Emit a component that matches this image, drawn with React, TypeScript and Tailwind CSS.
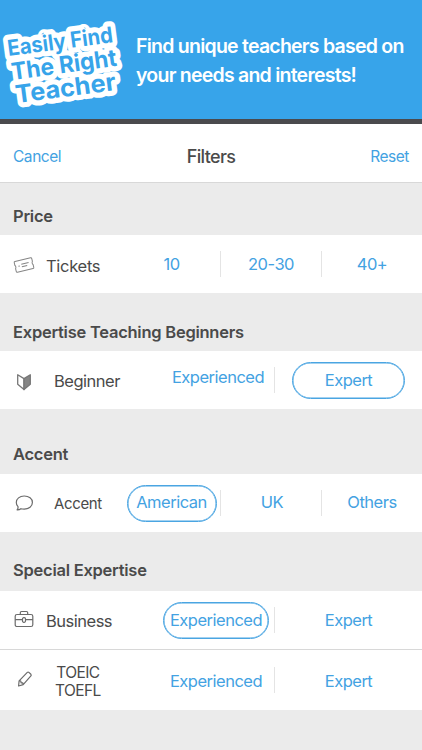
import React from 'react';

interface Option {
  label: string;
  selected?: boolean;
  className?: string;
}

interface FilterRowProps {
  icon: React.ReactNode;
  label: React.ReactNode;
  labelClass: string;
  options: Option[];
  className?: string;
}

const TicketIcon = () => (
  <svg width="22" height="20" viewBox="0 0 22 20" fill="none" stroke="#858585" strokeWidth="1" strokeLinejoin="round">
    <g transform="rotate(-13 11 10)">
      <path d="M3 4.500h16q1 0 1 1v2.900q-.6.400-.6 1.600t.6 1.600v2.900q0 1-1 1H3q-1 0-1-1v-2.900q.6-.4.6-1.600T2 8.400V5.500q0-1 1-1z" />
      <path d="M8.500 8.700h7.500M8.500 11.300h5.500M5.300 10h1.400" />
    </g>
  </svg>
);

const BeginnerIcon = () => (
  <svg className="mt-[2px]" width="16" height="18" viewBox="0 0 16 18" stroke="#777" strokeWidth="1.3" strokeLinejoin="round">
    <path d="M8 5.600 1.700 1.800v9.400L8 16.600z" fill="#fff" />
    <path d="M8 5.600l6.300-3.800v9.400L8 16.600z" fill="#858585" />
  </svg>
);

const BubbleIcon = () => (
  <svg className="-mt-[2px]" width="20" height="18" viewBox="0 0 20 18" fill="none" stroke="#6b6b6b" strokeWidth="1.2" strokeLinejoin="round">
    <path d="M10.200 2C5.600 2 2.300 4.800 2.300 8.400c0 1.800.7 3.100 1.700 4.200q.3 1.900-.9 3.300 2.300.1 3.800-1.200c1 .3 2.100.4 3.300.4 4.700 0 8.200-2.900 8.200-6.700S14.900 2 10.200 2z" />
  </svg>
);

const BriefcaseIcon = () => (
  <svg className="-mt-[5px]" width="20" height="18" viewBox="0 0 20 18" fill="none" stroke="#6b6b6b" strokeWidth="1.2" strokeLinejoin="round">
    <rect x="1.200" y="4.500" width="17.600" height="12" rx="1.800" />
    <path d="M6.300 4.500V2.700q0-1.200 1.200-1.200h5q1.200 0 1.200 1.200v1.800M1.200 9.700h7M11.800 9.700h7" />
    <rect x="8.500" y="7.700" width="3" height="4.600" rx="1.200" />
  </svg>
);

const PencilIcon = () => (
  <svg className="-mt-[4px] ml-px" width="16" height="18" viewBox="0 0 16 18" fill="none" stroke="#6b6b6b" strokeWidth="1.2" strokeLinejoin="round">
    <path d="M1.600 16l.5-5.200 8.200-8.400q.8-.7 1.600 0l2 1.900q.7.800 0 1.600l-7.700 8.800zM2.100 10.800l1.700.2.300 1.800 1.700.1.400 1.800" />
  </svg>
);

const Sticker = () => (
  <svg
    className="shrink-0"
    width="130"
    height="119"
    viewBox="0 0 130 119"
    fontFamily="Inter, sans-serif"
    fontWeight="700"
    fill="#37a4ea"
    strokeWidth="10.500"
    strokeLinejoin="round"
  >
    {/* white outline first, so it never covers the neighbouring lines */}
    {[false, true].map((front) => (
      <g key={String(front)} stroke={front ? 'none' : '#fff'}>
        <text transform="translate(8.500 56) rotate(-7.500)" fontSize="22" textLength="106" lengthAdjust="spacingAndGlyphs">Easily Find</text>
        <text transform="translate(12.500 80) rotate(-7.800)" fontSize="23.500" textLength="106" lengthAdjust="spacingAndGlyphs">The Right</text>
        <text transform="translate(16.500 103) rotate(-7.500)" fontSize="24.500" textLength="101" lengthAdjust="spacingAndGlyphs">Teacher</text>
      </g>
    ))}
  </svg>
);

const SectionTitle = ({ children, className }: { children: React.ReactNode; className: string }) => (
  <h2 className={`pl-[13px] text-[16.5px] font-semibold leading-5 tracking-[-0.25px] text-[#4a4a4a] ${className}`}>{children}</h2>
);

const FilterRow: React.FC<FilterRowProps> = ({ icon, label, labelClass, options, className = 'h-[58px]' }) => {
  const three = options.length === 3;
  return (
    <div className={`flex items-center bg-white ${className}`}>
      <div className="flex w-12 shrink-0 justify-center pt-0.5">{icon}</div>
      <div className={`shrink-0 whitespace-nowrap text-center leading-[18px] text-[#4a4a4a] ${labelClass}`}>{label}</div>
      <div className={`ml-auto grid shrink-0 items-center ${three ? 'w-[299px] grid-cols-[97px_101px_101px]' : 'w-[264px] grid-cols-[116px_148px]'}`}>
        {options.map((option, i) => (
          <div key={option.label} className={`flex h-[26px] items-center justify-center ${i > 0 ? 'border-l border-[#e4e4e4]' : ''}`}>
            <button
              className={`flex h-[37px] shrink-0 items-center justify-center whitespace-nowrap rounded-full text-[16.5px] tracking-[-0.5px] text-[#43a2e2] ${option.selected ? 'border border-[#4aa5e2] shadow-[inset_0_0_0_0.5px_#4aa5e2]' : ''} ${option.className ?? ''}`}
            >
              {option.label}
            </button>
          </div>
        ))}
      </div>
    </div>
  );
};

export default function App() {
  return (
    <div className="h-[750px] w-[422px] overflow-hidden bg-[#ebebeb] font-['Inter',sans-serif]">
      <header className="flex h-[124px] border-b-[5px] border-[#4a4a4d] bg-[#37a4ea]">
        <Sticker />
        <p className="whitespace-nowrap pl-[6px] pt-8 text-[19.5px] font-[560] leading-[29px] tracking-[-0.76px] text-white">
          Find unique teachers based on
          <br />
          your needs and interests!
        </p>
      </header>

      <nav className="grid h-[59px] grid-cols-3 items-center border-b border-[#d8d8d8] bg-white px-[13px] pt-[7px] text-[15.5px] tracking-[-0.45px] text-[#43a2e2]">
        <button className="text-left">Cancel</button>
        <h1 className="text-center text-[18px] font-medium tracking-[-0.65px] text-[#4a4a4a]">Filters</h1>
        <button className="text-right">Reset</button>
      </nav>

      <SectionTitle className="h-[52px] pt-[23px]">Price</SectionTitle>
      <FilterRow
        icon={<TicketIcon />}
        label="Tickets"
        labelClass="text-[16.5px] tracking-[-0.3px] pt-1 -ml-0.5"
        options={[{ label: '10' }, { label: '20-30' }, { label: '40+' }]}
      />

      <SectionTitle className="h-[58px] pt-[29px]">Expertise Teaching Beginners</SectionTitle>
      <FilterRow
        icon={<BeginnerIcon />}
        label="Beginner"
        labelClass="text-[16.5px] tracking-[-0.5px] pl-1.5 pt-0.5"
        options={[{ label: 'Experienced', className: 'pb-1.5 pl-1' }, { label: 'Expert', selected: true, className: 'w-[113px]' }]}
      />

      <SectionTitle className="h-[65px] pt-[35px]">Accent</SectionTitle>
      <FilterRow
        icon={<BubbleIcon />}
        label="Accent"
        labelClass="text-[15px] tracking-[-0.35px] pl-1.5 pt-0.5"
        options={[{ label: 'American', selected: true, className: 'w-[90px] pb-0.5' }, { label: 'UK', className: 'pb-0.5 pl-0.5' }, { label: 'Others', className: 'pb-0.5' }]}
      />

      <SectionTitle className="h-[59px] pt-[28px]">Special Expertise</SectionTitle>
      <FilterRow
        icon={<BriefcaseIcon />}
        label="Business"
        labelClass="text-[16.5px] tracking-[-0.5px] pt-0.5 -ml-0.5"
        className="h-[59px] border-b border-[#d8d8d8]"
        options={[{ label: 'Experienced', selected: true, className: 'w-[106px]' }, { label: 'Expert' }]}
      />
      <FilterRow
        icon={<PencilIcon />}
        label={<>TOEIC<br />TOEFL</>}
        labelClass="text-[15.5px] tracking-[-0.6px] pl-[7px] pt-1"
        className="h-[60px]"
        options={[{ label: 'Experienced', className: 'pt-0.5' }, { label: 'Expert', className: 'pt-0.5' }]}
      />
    </div>
  );
}
